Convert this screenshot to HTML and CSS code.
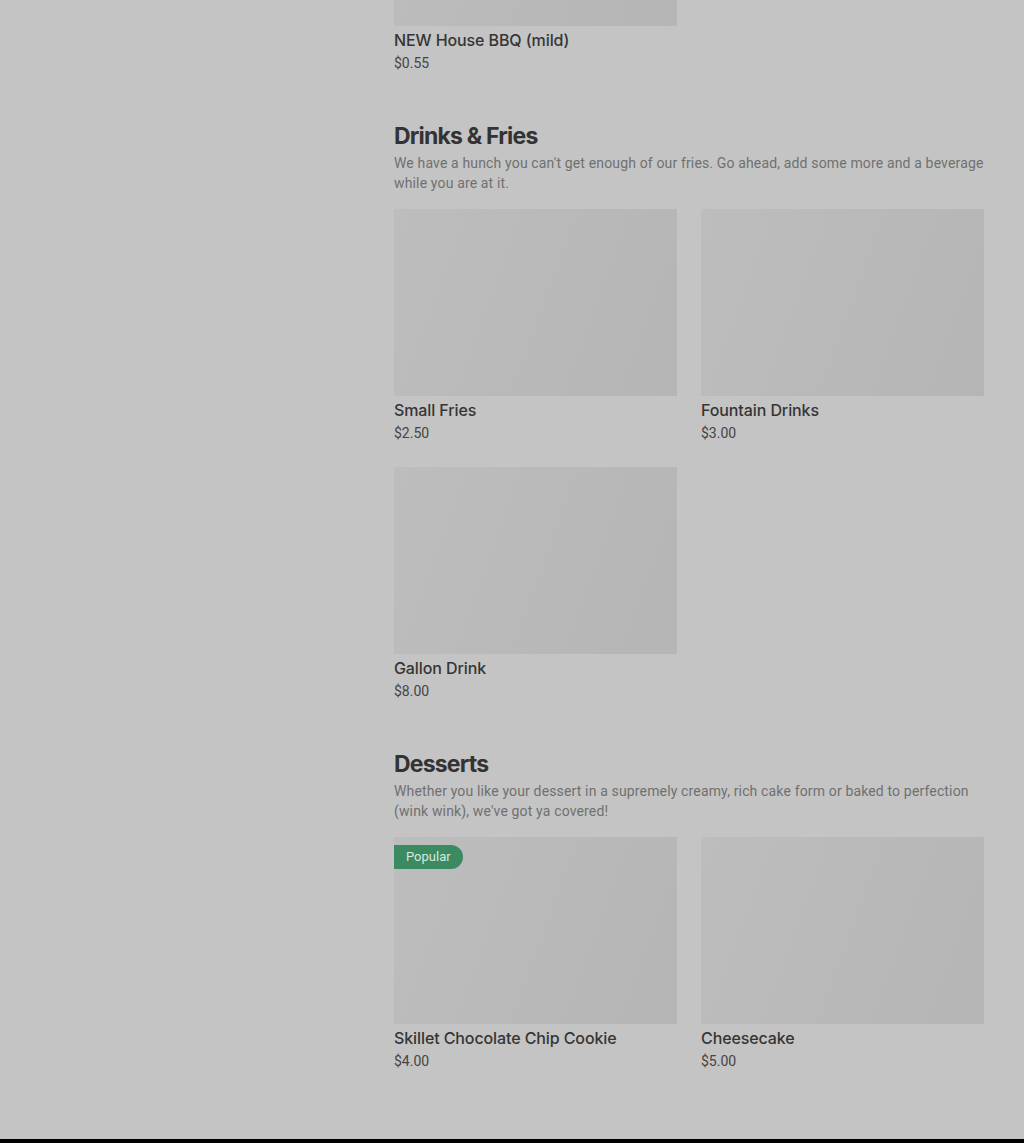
FILE: index.html
```html
<!DOCTYPE html>
<html lang="en">
<head>
    <meta charset="UTF-8">
    <meta name="viewport" content="width=device-width, initial-scale=1.0">
    <title>Menu</title>
    <link rel="stylesheet" href="styles.css">
</head>
<body>
    <div class="page">
        <aside class="sidebar"></aside>

        <main class="menu">
            <section class="category">
                <div class="item-grid">
                    <div class="item">
                        <div class="item-photo"></div>
                        <h3 class="item-name">NEW House BBQ (mild)</h3>
                        <p class="item-price">$0.55</p>
                    </div>
                </div>
            </section>

            <section class="category">
                <h2>Drinks &amp; Fries</h2>
                <p class="category-desc">We have a hunch you can't get enough of our fries. Go ahead, add some more and a beverage while you are at it.</p>
                <div class="item-grid">
                    <div class="item">
                        <div class="item-photo"></div>
                        <h3 class="item-name">Small Fries</h3>
                        <p class="item-price">$2.50</p>
                    </div>
                    <div class="item">
                        <div class="item-photo"></div>
                        <h3 class="item-name">Fountain Drinks</h3>
                        <p class="item-price">$3.00</p>
                    </div>
                    <div class="item">
                        <div class="item-photo"></div>
                        <h3 class="item-name">Gallon Drink</h3>
                        <p class="item-price">$8.00</p>
                    </div>
                </div>
            </section>

            <section class="category">
                <h2>Desserts</h2>
                <p class="category-desc">Whether you like your dessert in a supremely creamy, rich cake form or baked to perfection (wink wink), we've got ya covered!</p>
                <div class="item-grid">
                    <div class="item">
                        <div class="item-photo">
                            <span class="badge">Popular</span>
                        </div>
                        <h3 class="item-name">Skillet Chocolate Chip Cookie</h3>
                        <p class="item-price">$4.00</p>
                    </div>
                    <div class="item">
                        <div class="item-photo"></div>
                        <h3 class="item-name">Cheesecake</h3>
                        <p class="item-price">$5.00</p>
                    </div>
                </div>
            </section>
        </main>
    </div>
    <footer class="footer"></footer>
</body>
</html>
```

FILE: styles.css
```css
body {
    margin: 0;
    background-color: #c4c4c4;
    font-family: Roboto, "Liberation Sans", sans-serif;
    color: #333;
    overflow: hidden;
}
.page {
    display: grid;
    grid-template-columns: 1fr 590px;
    padding-right: 40px;
}
.menu {
    margin-top: -161px;
    padding-bottom: 22px;
}
.category {
    padding-bottom: 46px;
}
.category h2 {
    margin: 0;
    font-family: Inter, Roboto, sans-serif;
    font-size: 23px;
    line-height: 34px;
    font-weight: 700;
    letter-spacing: -0.8px;
    color: #333;
}
.category-desc {
    margin: 0 0 16px;
    font-size: 14px;
    line-height: 20px;
    letter-spacing: 0.15px;
    color: #707070;
}
.item-grid {
    display: grid;
    grid-template-columns: 1fr 1fr;
    gap: 24px;
}
.item-photo {
    position: relative;
    height: 187px;
    background: linear-gradient(110deg, #bdbdbd 0%, #b9b9b9 50%, #b5b5b5 100%);
}
.badge {
    position: absolute;
    top: 8px;
    left: 0;
    padding: 0 12px;
    height: 24px;
    line-height: 24px;
    font-size: 13px;
    color: #d6e9de;
    background-color: #3c8a62;
    border-radius: 0 12px 12px 0;
}
.item-name {
    margin: 2px 0 0;
    font-family: Inter, Roboto, sans-serif;
    font-size: 16px;
    line-height: 24px;
    font-weight: 500;
    letter-spacing: -0.1px;
    color: #353535;
}
.item-price {
    margin: 1px 0 0;
    font-size: 14px;
    line-height: 20px;
    color: #444;
}
.footer {
    height: 200px;
    background-color: #000;
}
```
